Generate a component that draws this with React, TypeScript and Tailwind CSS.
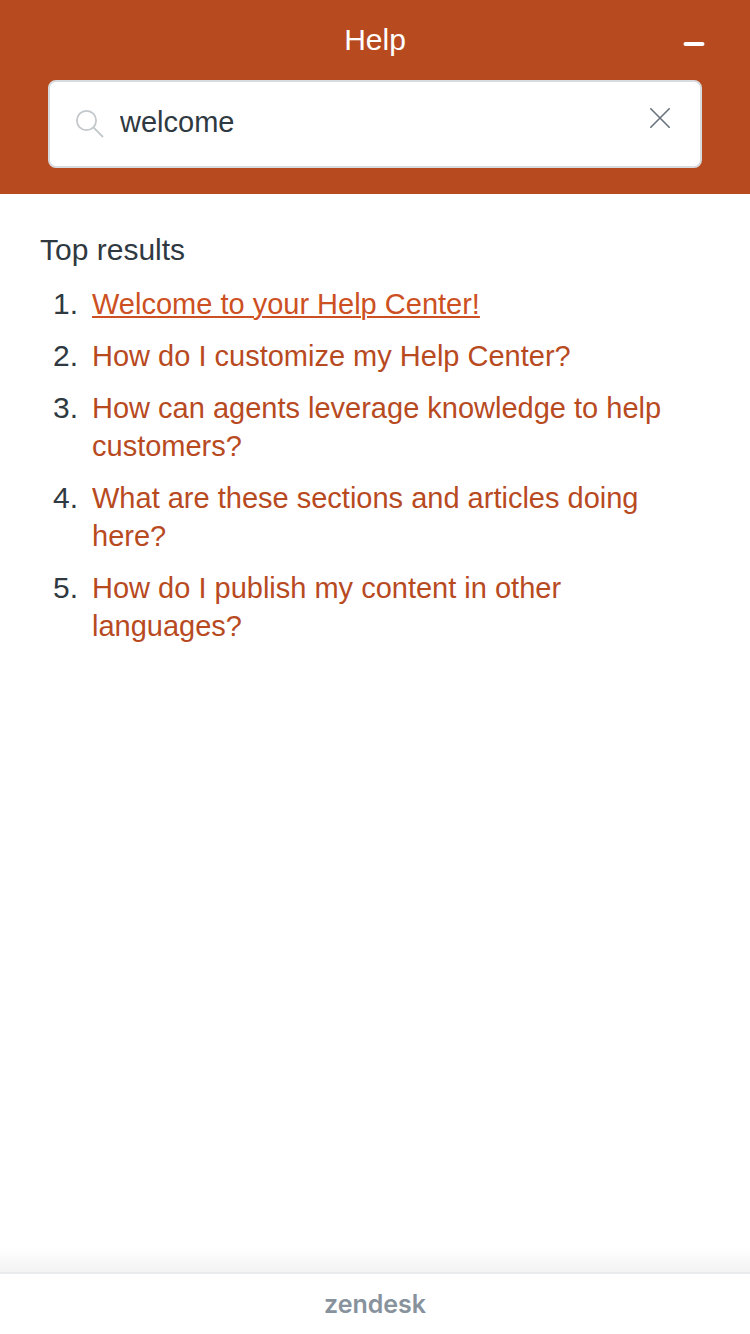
import { useState } from "react";

const articles = [
  "Welcome to your Help Center!",
  "How do I customize my Help Center?",
  "How can agents leverage knowledge to help customers?",
  "What are these sections and articles doing here?",
  "How do I publish my content in other languages?",
];

function SearchIcon() {
  return (
    <svg className="size-7 shrink-0 text-[#c2c8cc]" viewBox="0 0 28 28" fill="none" stroke="currentColor" strokeWidth="1.8" aria-hidden="true">
      <circle cx="10.5" cy="10.5" r="9.6" />
      <path d="M17.4 17.4 27 27" />
    </svg>
  );
}

function ClearIcon() {
  return (
    <svg className="size-5" viewBox="0 0 20 20" fill="none" stroke="currentColor" strokeWidth="1.6" strokeLinecap="round" aria-hidden="true">
      <path d="M0.8 0.8 19.2 19.2M19.2 0.8 0.8 19.2" />
    </svg>
  );
}

function MinimizeIcon() {
  return (
    <svg className="h-1 w-[22px]" viewBox="0 0 22 4" aria-hidden="true">
      <rect x="0.5" y="0" width="21" height="4" rx="2" fill="currentColor" />
    </svg>
  );
}

export default function App() {
  const [query, setQuery] = useState("welcome");

  return (
    <div className="flex min-h-screen flex-col bg-white font-['Liberation_Sans',Arial,sans-serif] text-[30px] leading-[38px] text-[#2f3941]">
      <header className="bg-[#b84a1f] px-12 pb-[26px]">
        <div className="grid h-20 grid-cols-[1fr_auto_1fr] items-center text-white">
          <h1 className="col-start-2">Help</h1>
          <button type="button" aria-label="Minimize" className="-mr-[3px] flex h-10 items-center justify-self-end pt-2">
            <MinimizeIcon />
          </button>
        </div>
        <form
          role="search"
          onSubmit={(e) => e.preventDefault()}
          className="flex h-[88px] items-center gap-4 rounded-lg border-2 border-[#d8dcde] bg-white pr-[30px] pl-[26px]"
        >
          <SearchIcon />
          <input
            type="text"
            aria-label="Search help articles"
            value={query}
            onChange={(e) => setQuery(e.target.value)}
            className="h-10 min-w-0 flex-1 bg-transparent pb-1 text-[29px] outline-none"
          />
          <button type="button" aria-label="Clear search" onClick={() => setQuery("")} className="pb-3 text-[#68737d]">
            <ClearIcon />
          </button>
        </form>
      </header>

      <main className="flex-1 px-10 pt-[37px] pb-10">
        <h2>Top results</h2>
        <ol className="mt-4 flex flex-col gap-[14px]">
          {articles.map((title, index) => (
            <li key={title} className="flex">
              <span className="w-[38px] shrink-0 text-right">{index + 1}.</span>
              <a
                href="#"
                className={
                  index === 0
                    ? "ml-[14px] text-[29px] text-[#cc5022] underline decoration-2 underline-offset-2"
                    : "ml-[14px] text-[29px] text-[#b84a1f]"
                }
              >
                {title}
              </a>
            </li>
          ))}
        </ol>
      </main>

      <div className="h-6 bg-linear-to-b from-white to-[#f3f3f3]" />
      <footer className="flex h-[62px] items-center justify-center border-t-2 border-[#e9ebed]">
        <a href="#" className="font-['Inter',sans-serif] text-[25px] leading-8 font-semibold text-[#87929d]">
          zendesk
        </a>
      </footer>
    </div>
  );
}
